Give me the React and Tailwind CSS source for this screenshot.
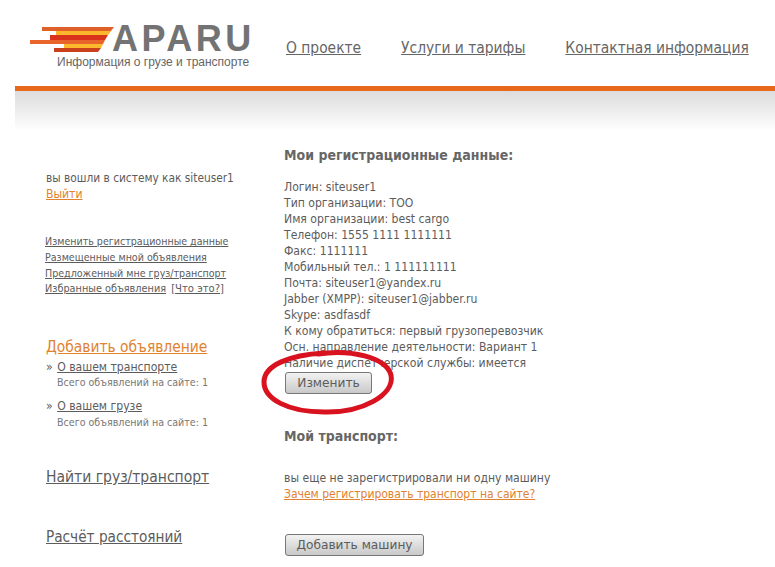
const f = "font-['DejaVu_Sans_Condensed','DejaVu_Sans',sans-serif]";
const body = f + " text-[12.1px] leading-[16px] text-[#5c5c5c]";

const info = [
  "Логин: siteuser1",
  "Тип организации: ТОО",
  "Имя организации: best cargo",
  "Телефон: 1555 1111 1111111",
  "Факс: 1111111",
  "Мобильный тел.: 1 111111111",
  "Почта: siteuser1@yandex.ru",
  "Jabber (XMPP): siteuser1@jabber.ru",
  "Skype: asdfasdf",
  "К кому обратиться: первый грузоперевозчик",
  "Осн. направление деятельности: Вариант 1",
  "Наличие диспетчерской службы: имеется",
];

function Logo() {
  return (
    <div className="relative w-[225px] h-[70px] shrink-0">
      <div className="flex items-start">
        <svg width="84" height="26" viewBox="0 0 84 26" className="mt-[27px] shrink-0">
          <polygon points="12,0 84,0 81,4 12,4" fill="#e0602a" />
          <polygon points="26,4 81,4 78,8 26,8" fill="#fbb62c" />
          <polygon points="20,8 78,8 75,13 20,13" fill="#d9331b" />
          <polygon points="0,13 75,13 73,17 0,17" fill="#e8642a" />
          <polygon points="34,17 73,17 71,21 34,21" fill="#fdb92d" />
          <polygon points="24,21 71,21 68,25 24,25" fill="#c9401c" />
        </svg>
        <span className="font-['Liberation_Sans',sans-serif] font-bold text-[36px] leading-[28px] text-[#737373] tracking-[3.5px] mt-[25px] -ml-[2px]">APARU</span>
      </div>
      <div className="absolute left-[27px] top-[55px] whitespace-nowrap font-['Liberation_Sans',sans-serif] text-[12px] leading-[14px] text-[#666]">Информация о грузе и транспорте</div>
    </div>
  );
}

function Btn({ children, cls }) {
  return (
    <button className={"block h-[22px] rounded-[3px] border border-[#777] bg-gradient-to-b from-[#f2f2f2] to-[#c9c9c9] font-['DejaVu_Sans',sans-serif] text-[12.2px] leading-none text-[#5c5c5c] " + cls}>{children}</button>
  );
}

export default function App() {
  return (
    <div className="relative w-[775px] h-[567px] overflow-hidden bg-white">
      <header className="flex h-[86px] pl-[30px]">
        <Logo />
        <nav className={"flex gap-[40px] ml-[31px] pt-[38px] text-[15.4px] leading-[20px] text-[#666] whitespace-nowrap " + f}>
          <a className="underline">О проекте</a>
          <a className="underline">Услуги и тарифы</a>
          <a className="underline">Контактная информация</a>
        </nav>
      </header>
      <div className="ml-[15px] h-[5px] bg-[#e8691b]" />
      <div className="ml-[15px] h-[40px] bg-gradient-to-b from-[#dcdcdc] to-white" />

      <div className="flex">
        <aside className={"w-[284px] shrink-0 pl-[46px] pt-[39px] " + body}>
          <div className="text-[11.8px]">вы вошли в систему как siteuser1</div>
          <a className="underline text-[#e0822f]">Выйти</a>
          <div className="mt-[31px] text-[10.6px] whitespace-nowrap -ml-[1px]">
            <a className="block underline">Изменить регистрационные данные</a>
            <a className="block underline">Размещенные мной объявления</a>
            <a className="block underline">Предложенный мне груз/транспорт</a>
            <div className="text-[10.8px]"><a className="underline">Избранные объявления</a> <span className="ml-[2px] text-[11.2px]">[<a className="underline">Что это?</a>]</span></div>
          </div>
          <a className="block mt-[40px] text-[15.4px] leading-[20px] underline text-[#e0822f]">Добавить объявление</a>
          <div className="mt-[2px]">
            <div className="leading-[16px]">» <a className="underline ml-[1px]">О вашем транспорте</a></div>
            <div className="pl-[11px] text-[10.6px] leading-[14px] text-[#777]">Всего объявлений на сайте: 1</div>
          </div>
          <div className="mt-[9px]">
            <div className="leading-[16px]">» <a className="underline ml-[1px]">О вашем грузе</a></div>
            <div className="pl-[11px] mt-[1px] text-[10.6px] leading-[14px] text-[#777]">Всего объявлений на сайте: 1</div>
          </div>
          <a className="block mt-[38px] text-[15.5px] leading-[20px] underline">Найти груз/транспорт</a>
          <a className="block mt-[40px] text-[15.2px] leading-[20px] underline">Расчёт расстояний</a>
        </aside>

        <main className={"flex-1 pt-[14px] whitespace-nowrap " + body}>
          <h2 className="font-bold text-[14px] leading-[20px] text-[#666]">Мои регистрационные данные:</h2>
          <div className="mt-[14px]">
            {info.map((t) => <div key={t}>{t}</div>)}
          </div>
          <Btn cls="ml-[1px] w-[87px] mt-[1px]">Изменить</Btn>
          <h2 className="mt-[32px] font-bold text-[14px] leading-[20px] text-[#666]">Мой транспорт:</h2>
          <div className="mt-[24px]">вы еще не зарегистрировали ни одну машину</div>
          <a className="underline text-[#e0822f] text-[12px]">Зачем регистрировать транспорт на сайте?</a>
          <Btn cls="ml-[1px] w-[139px] mt-[32px]">Добавить машину</Btn>
        </main>
      </div>

      <svg className="absolute left-[258px] top-[347px]" width="140" height="72" viewBox="0 0 140 72">
        <path d="M60 7 C92 2 128 10 133 28 C137 48 104 66 66 65 C30 65 6 52 6 35 C6 18 32 8 66 6" fill="none" stroke="#d8121f" strokeWidth="5" strokeLinecap="round" />
      </svg>
    </div>
  );
}
